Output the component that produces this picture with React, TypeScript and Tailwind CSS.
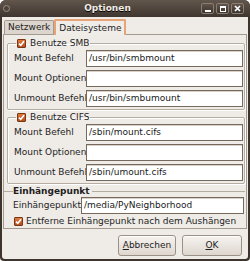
import React from "react";

function Check() {
  return (
    <span className="w-[9px] h-[9px] rounded-[1px] border border-[#7a3512] bg-gradient-to-b from-[#e07a3c] to-[#b4501e] flex items-center justify-center shrink-0">
      <svg width="7" height="7" viewBox="0 0 7 7">
        <path d="M1 3.6 L2.8 5.4 L6 1.2" stroke="#fff" strokeWidth="1.6" fill="none" />
      </svg>
    </span>
  );
}

function Entry({ value, className = "" }: { value: string; className?: string }) {
  return (
    <div className={"h-[17px] bg-white border border-[#766a5e] shadow-[inset_0_1px_0_#d8d2cb] flex items-center pl-[2px] text-[#1a1a1a] whitespace-nowrap overflow-hidden " + className}>
      {value}
    </div>
  );
}

function Row({ label, value }: { label: string; value: string }) {
  return (
    <>
      <div className="h-[17px] flex items-center whitespace-nowrap">{label}</div>
      <Entry value={value} />
    </>
  );
}

function Frame({ title, children }: { title: string; children: React.ReactNode }) {
  return (
    <fieldset className="border border-[#b5aca2] shadow-[inset_1px_1px_0_#fff,1px_1px_0_#fff] rounded-[2px] pl-[6px] pr-[1px] pb-[2px]">
      <legend className="ml-[2px] px-[1px] h-[12px] flex items-center gap-[4px]">
        <Check />
        <span>{title}</span>
      </legend>
      <div className="grid grid-cols-[72px_1fr] gap-y-[3px] mt-[1px]">{children}</div>
    </fieldset>
  );
}

function TitleBtn({ children }: { children: React.ReactNode }) {
  return (
    <div className="w-[13px] h-[11px] rounded-[2px] border border-[#8a7d71] bg-gradient-to-b from-[#5f534a] to-[#3e352e] flex items-center justify-center">
      {children}
    </div>
  );
}

export default function App() {
  return (
    <div className="w-[250px] h-[261px] bg-[#3d342d] rounded-t-[6px] rounded-b-[4px] flex flex-col overflow-hidden font-['DejaVu_Sans',sans-serif] text-[9px] leading-[11px] text-[#1e1e1e]">
      {/* title bar */}
      <div className="h-[17px] shrink-0 bg-gradient-to-b from-[#62564c] to-[#3f362f] flex items-center pl-[3px] pr-[6px]">
        <div className="w-[7px] h-[7px] rounded-full border border-[#9c8f83] bg-[#4d433b]" />
        <div className="flex-1 text-center font-bold text-[9px] text-[#f1ece6] [text-shadow:0_1px_0_#000] pl-[4px]">Optionen</div>
        <div className="flex gap-[2px]">
          <TitleBtn>
            <div className="w-[6px] h-[2px] bg-white mt-[4px]" />
          </TitleBtn>
          <TitleBtn>
            <div className="w-[6px] h-[6px] border border-white border-t-2" />
          </TitleBtn>
          <TitleBtn>
            <svg width="7" height="7" viewBox="0 0 7 7">
              <path d="M1 1 L6 6 M6 1 L1 6" stroke="#fff" strokeWidth="1.7" />
            </svg>
          </TitleBtn>
        </div>
      </div>

      {/* body */}
      <div className="flex-1 mx-[2px] mb-[2px] bg-[#efebe7] rounded-b-[3px] flex flex-col px-[1px] pt-[1px]">
        {/* tabs */}
        <div className="flex pl-[1px] h-[16px] items-end relative z-10">
          <div className="h-[14px] px-[3px] bg-[#dcd5cd] border border-b-0 border-[#a39a90] rounded-t-[2px] flex items-center">
            Netzwerk
          </div>
          <div className="h-[16px] -mb-[1px] px-[3px] bg-[#f0ece8] border-2 border-b-0 border-[#e7a479] rounded-t-[2px] flex items-center">
            Dateisysteme
          </div>
        </div>
        {/* notebook panel */}
        <div className="h-[195px] border border-[#a39a90] bg-[#efebe7] pl-[3px] pr-[1px] pt-[2px] flex flex-col gap-[1px]">
          <Frame title="Benutze SMB">
            <Row label="Mount Befehl" value="/usr/bin/smbmount" />
            <Row label="Mount Optionen" value="" />
            <Row label="Unmount Befehl" value="/usr/bin/smbumount" />
          </Frame>
          <Frame title="Benutze CIFS">
            <Row label="Mount Befehl" value="/sbin/mount.cifs" />
            <Row label="Mount Optionen" value="" />
            <Row label="Unmount Befehl" value="/sbin/umount.cifs" />
          </Frame>
          <fieldset className="border-0 border-t border-[#b5aca2] -ml-[3px] pl-[9px] pr-[1px]">
            <legend className="h-[12px] flex items-center font-bold pr-[2px]">Einhängepunkt</legend>
            <div className="flex items-center">
              <div className="w-[68px] whitespace-nowrap">Einhängepunkt</div>
              <Entry value="/media/PyNeighborhood" className="flex-1" />
            </div>
            <div className="flex items-center gap-[3px] pl-[1px] mt-[1px] h-[12px]">
              <Check />
              <span>Entferne Einhängepunkt nach dem Aushängen</span>
            </div>
          </fieldset>
        </div>
        {/* buttons */}
        <div className="flex justify-end gap-[6px] pr-[5px] mt-[6px]">
          <button className="w-[58px] h-[21px] rounded-[3px] border border-[#9b9187] bg-gradient-to-b from-[#f6f3f0] to-[#ded7cf] shadow-[inset_0_1px_0_#fff]">
            <span className="underline">A</span>bbrechen
          </button>
          <button className="w-[60px] h-[21px] rounded-[3px] border border-[#9b9187] bg-gradient-to-b from-[#f6f3f0] to-[#ded7cf] shadow-[inset_0_1px_0_#fff]">
            <span className="underline">O</span>K
          </button>
        </div>
      </div>
    </div>
  );
}
